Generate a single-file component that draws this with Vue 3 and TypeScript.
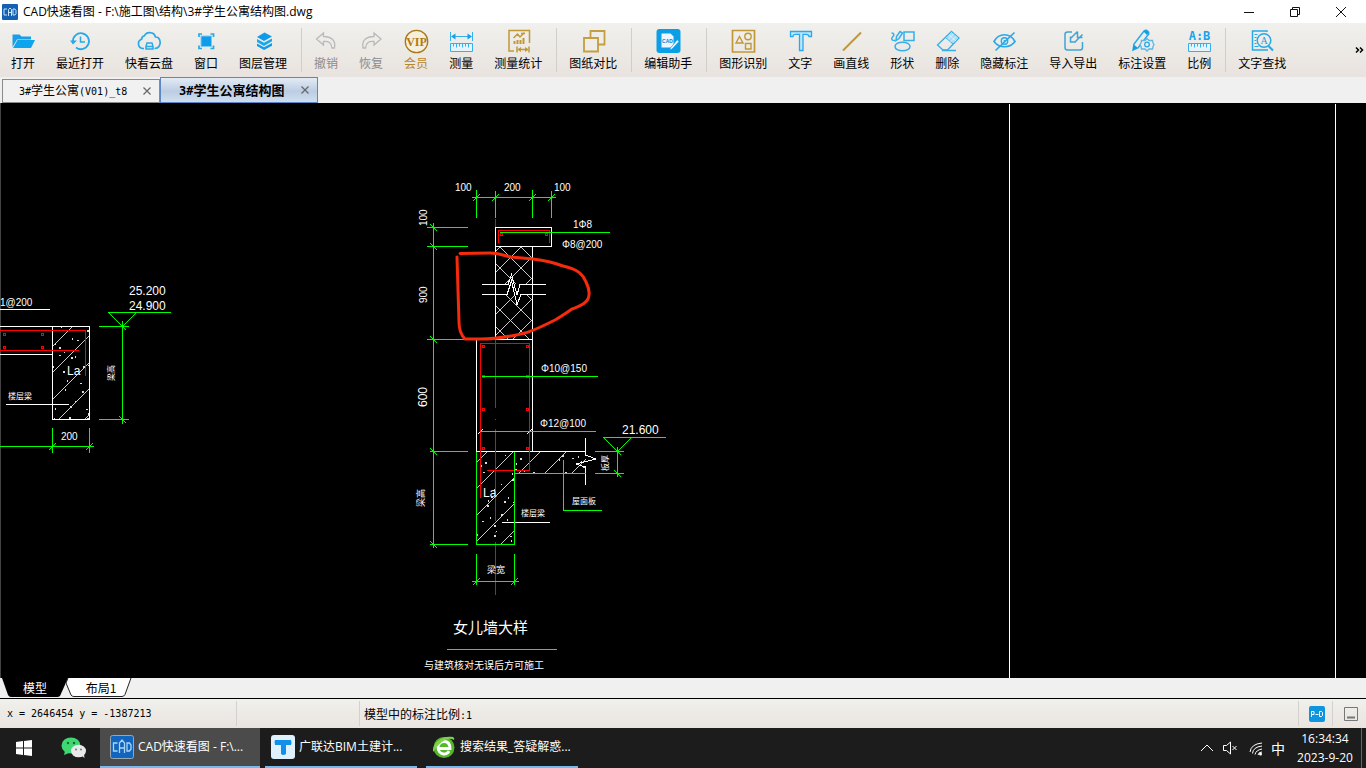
<script setup lang="ts">
interface Tool {
  label: string
  icon: string
  tone?: 'muted' | 'gold'
  divider?: boolean
}

const ruler = (y: number): string =>
  `<path d="M2.500 ${y}h22v8h-22zM5.500 ${y}v3M8.500 ${y}v4M11.500 ${y}v3M14.500 ${y}v4M17.500 ${y}v3M20.500 ${y}v4" fill="#e3f4fc" stroke="#35b0ec"/>`

const tools: Tool[] = [
  {
    label: '打开',
    icon: '<path fill="#1a9fe6" d="M2.500 19V6.500h7l2 2H21v3H7z"/><path fill="#0ea5ee" d="M7.500 12H25L21 20H3z"/>',
  },
  {
    label: '最近打开',
    icon: '<g fill="none" stroke="#27a9e8" stroke-width="1.800"><path d="M6 14a8 8 0 1 1 3 5.500"/><path d="M13.500 8.500V14H18" stroke-width="1.500"/></g><path fill="#27a9e8" d="M3 12.500h7L6 16.500z"/>',
  },
  {
    label: '快看云盘',
    icon: '<path d="M8 20.500H6.500a4.800 4.800 0 0 1-1-9.200 4 4 0 0 1 3-3.500C10 3.500 18 3 19.500 9c4.500 0 5.500 5 4 8.500-1 2.500-3 3-5 3" fill="none" stroke="#27a9e8" stroke-width="1.700"/><path d="M10 18.500l1-3.500h5l1 3.500v2.500h-7zM10 18.500h7" fill="none" stroke="#27a9e8" stroke-width="1.500"/>',
  },
  {
    label: '窗口',
    icon: '<path d="M8 8h10.500v10.500H8z" fill="#0e9ded" stroke="#7ccaf3"/><path d="M6 9V6h3M17.500 6h3v3M20.500 17.500v3h-3M9 20.500H6v-3" fill="none" stroke="#27a9e8" stroke-width="1.700"/>',
  },
  {
    label: '图层管理',
    icon: '<path fill="#0f9bea" d="M14.500 4.500L22 8.500l-8 4.500-7-4z"/><path fill="#1aa6ee" d="M7 11l7 3.800L22 10.500v2.800L14 18l-7-4z"/><path fill="#0f9bea" d="M7 15.500l7 3.800L22 15v2.800L14 22l-7-4z"/>',
  },
  {
    label: '撤销',
    tone: 'muted',
    divider: true,
    icon: '<path d="M10.500 5L3.500 11l7 6v-3.500c5-.500 8 1 8.500 6.500h2.500C23 12 18 8.500 10.500 8.500z" fill="none" stroke="#b9b9b9" stroke-width="1.300"/>',
  },
  {
    label: '恢复',
    tone: 'muted',
    icon: '<path d="M16 5l7 6-7 6v-3.500c-5-.500-8 1-8.500 6.500H5C3.500 12 8.500 8.500 16 8.500z" fill="none" stroke="#b9b9b9" stroke-width="1.300"/>',
  },
  {
    label: '会员',
    tone: 'gold',
    icon: '<circle cx="13.500" cy="13.500" r="11.200" fill="#f6efdc" stroke="#a87718" stroke-width="1.300"/><text x="13.500" y="17.500" text-anchor="middle" font-family="Liberation Serif, serif" font-weight="700" font-size="12" fill="#b07b10">VIP</text>',
  },
  {
    label: '测量',
    icon: `<path d="M2.500 4v9M24.500 4v9M4 8.500h19" stroke="#35b0ec" fill="none"/><path fill="#179fe6" d="M3 8.500l4.500-3v6zM24 8.500l-4.500-3v6z"/>${ruler(15.5)}`,
  },
  {
    label: '测量统计',
    icon: '<g fill="none" stroke="#c09838" stroke-width="1.500"><path d="M9 23H4V2.500h20.500V15"/><path d="M8.500 10l4-4 2.500 3 4.500-4.500M16 5.500h4"/><path d="M9.500 16v-3M12.500 16v-4M15.500 16v-4M18.500 16v-6" stroke-width="2"/><path d="M12 18.500v6M24 18.500v6M13 21.500h10"/></g><path fill="#c09838" d="M12.500 21.500l3.500-2.500v5zM23.500 21.500L20 19v5z"/>',
  },
  {
    label: '图纸对比',
    divider: true,
    icon: '<g fill="#efede8" stroke="#c49e40" stroke-width="1.800"><path d="M10.500 3h14v13.500h-14z"/><path d="M4 10h14v13.500H4z"/></g>',
  },
  {
    label: '编辑助手',
    divider: true,
    icon: '<rect x="1.500" y="1" width="24" height="24" rx="3" fill="#0c9fe6"/><path d="M6.500 5.500h9l3 3v11h-12z" fill="#eaf7ff"/><text x="12.500" y="15" text-anchor="middle" font-family="Liberation Sans, sans-serif" font-size="5" font-weight="700" fill="#0c7fc4">CAD</text><path d="M15.500 20l-1 2 2.500-1 7-7.500-1.800-1.700z" fill="#fff" stroke="#0c9fe6" stroke-width=".700"/>',
  },
  {
    label: '图形识别',
    divider: true,
    icon: '<g fill="none" stroke="#c09838" stroke-width="1.400"><path d="M2.500 2.500h22v21.500h-22z" stroke-width="1.700"/><path d="M9.500 8.500l3.500 6.500H6z"/><circle cx="18" cy="8.500" r="3.200"/><path d="M15.500 15.500H21V21h-5.500z"/></g>',
  },
  {
    label: '文字',
    icon: '<path d="M3.500 3.500h21V8.500H22c0-2-1-2.200-3-2.200h-3V22.500h-3.500V6.300H9c-2 0-3 .200-3 2.200H3.500z" fill="#bfe6f9" stroke="#24abed" stroke-width="1.300"/>',
  },
  { label: '画直线', icon: '<path d="M5 22.500L23 4.500" stroke="#c09838" stroke-width="2"/>' },
  {
    label: '形状',
    icon: '<g fill="none" stroke="#36aee9" stroke-width="1.500"><path d="M15 4h10v8.500H15z"/><ellipse cx="13.500" cy="18.500" rx="7.500" ry="4.300"/><path d="M2.500 5c3 0 3 2 1 4s0 4 3 3.500"/><path d="M7 12.500l.500-4L11 3.500l2.500 1.500L10 10.500z" fill="#d9f0fb"/></g>',
  },
  {
    label: '删除',
    icon: '<path d="M17.500 3.500L25 10 13.500 22H9l-5.500-5z" fill="none" stroke="#36aee9" stroke-width="1.300"/><path d="M17.500 3.500L25 10l-6 6-7.500-6.500z" fill="#a8dcf5" stroke="#36aee9"/><path d="M15 7l7 6M20 5.500l-6 6M22.500 8l-6 6" stroke="#eff8fc" stroke-width=".700"/><path d="M8 22.500h14" stroke="#36aee9" stroke-width="1.500"/>',
  },
  {
    label: '隐藏标注',
    icon: '<g fill="none" stroke="#28a9ea" stroke-width="1.700"><path d="M3 13.500C8 4.500 19 4.500 24 13.500 19 20.500 8 20.500 3 13.500z"/><circle cx="13.500" cy="13" r="3.200" stroke-width="1.400"/><path d="M4.500 22.500l19-18"/></g><circle cx="13.500" cy="13" r="1" fill="#28a9ea"/>',
  },
  {
    label: '导入导出',
    icon: '<g fill="none" stroke="#3fa5d5" stroke-width="1.500"><path d="M12 4H7.500Q5 4 5 6.500v13Q5 22 7.500 22h12.500Q22.500 22 22.500 19.500V14"/><path d="M17.500 3.500L10.500 10.500v3.500h4.500L22.500 6.500M17.500 3.500v6h5M10.500 8.500v5.500H16"/></g>',
  },
  {
    label: '标注设置',
    icon: '<path d="M4 22l1-6L15 3q2.500-2 4.500 1 1 2-1 3.500L9 20z" fill="none" stroke="#27a9e8" stroke-width="1.500"/><path d="M4 22.500l.500-6 4 3zM14.500 3.500q3-2.500 5 1L18 7z" fill="#0b9fe8"/><path d="M18 10.500l2 2h3.500l.500 2.500 1 1.500-1 2-.500 2.500H20l-2 2-2-2h-3.500l-.500-2.500-1-2 1-1.500.500-2.500H16z" fill="#eeeae7" stroke="#58b9e7" stroke-width="1.300"/><circle cx="18" cy="16.500" r="2.300" fill="none" stroke="#27a9e8" stroke-width="1.300"/>',
  },
  {
    label: '比例',
    icon: `<text x="13.500" y="12" text-anchor="middle" font-family="DejaVu Sans Mono, monospace" font-weight="700" font-size="12" fill="#17a3ec">A:B</text>${ruler(15.5)}`,
  },
  {
    label: '文字查找',
    divider: true,
    icon: '<g fill="none" stroke="#27a9e8" stroke-width="1.500"><path d="M18 4V3H3.500v19H19"/><path d="M5.500 6.500h3M5.500 9.500h2M5.500 12.500h1.500M5.500 15.500h2M5.500 18.500h4" stroke-width="1"/><circle cx="15" cy="12.500" r="6.800"/><path d="M19.500 18l4.500 4.500" stroke-width="2"/></g><text x="15" y="16" text-anchor="middle" font-family="Liberation Serif, serif" font-size="10" fill="#1d9edd">A</text>',
  },
]

type Pt = [number, number]

const leftSpecks: Pt[] = [
  [61, 327], [87, 330], [72, 338], [77, 340], [55, 343], [59, 347], [64, 352], [71, 357], [75, 356], [59, 355],
  [53, 366], [83, 366], [88, 365], [63, 371], [67, 380], [80, 383], [65, 389], [82, 391], [75, 401], [70, 406],
  [55, 408], [86, 409], [88, 413], [69, 417], [54, 418], [87, 418],
]
const mainSpecks: Pt[] = [
  [505, 455], [485, 462], [481, 465], [483, 472], [512, 473], [512, 479], [501, 484], [494, 489], [488, 500],
  [491, 497], [508, 497], [504, 501], [513, 502], [501, 514], [490, 517], [482, 521], [507, 519], [494, 525],
  [496, 531], [494, 535], [477, 534], [510, 536], [511, 540], [487, 505], [539, 452], [520, 458], [516, 463],
  [515, 469], [524, 470], [533, 472], [552, 465], [562, 455], [559, 459], [572, 458], [578, 456], [565, 472],
  [581, 461], [583, 466],
]
// Dimension ticks: short 45° strokes through each extension-line crossing.
const risingTicks: Pt[] = [
  [52, 446], [89, 446], [476, 197], [495, 197], [532, 197], [551, 197], [476, 581], [514, 581],
]
const fallingTicks: Pt[] = [
  [122, 326], [122, 419], [433, 227], [433, 246], [433, 339], [433, 451], [433, 544], [617, 451], [617, 473],
]
const rebar: Pt[] = [
  [4, 334], [42, 334], [4, 347], [42, 347], [501, 234], [546, 234], [483, 346], [527, 346], [483, 376],
  [527, 376], [483, 409], [527, 409], [483, 448], [527, 448],
]
const concreteLeft = [399, 425, 452, 478, 504]
const concreteMain = [939, 965, 992, 1018, 1045]
const masonryRise = [747, 768, 789, 810, 831, 852, 873]
const masonryFall = [169, 190, 211, 232, 253, 274]
</script>

<template>
  <div class="app">
    <header class="title">
      <svg class="logo" viewBox="0 0 16 16"><rect width="16" height="16" rx="1" fill="#1461b4" /><path d="M5 5H2v6h3M6.500 12V5.500L8 4l1.500 1.500V12M6.500 8.500h3M11 5v6h2l1-1.500v-3L13 5z" fill="none" stroke="#c6e4fb" /></svg>
      <h1>CAD快速看图 - F:\施工图\结构\3#学生公寓结构图.dwg</h1>
      <div class="win">
        <button aria-label="最小化"><svg viewBox="0 0 12 12"><path d="M1 6.500h10" /></svg></button>
        <button aria-label="还原"><svg viewBox="0 0 12 12"><path d="M1.500 3.500h7v7h-7zM3.500 3.500v-2h7v7h-2" /></svg></button>
        <button aria-label="关闭"><svg viewBox="0 0 12 12"><path d="M1 1l10 10M11 1L1 11" /></svg></button>
      </div>
    </header>

    <nav class="tools">
      <template v-for="t in tools" :key="t.label">
        <i v-if="t.divider" class="divider"></i>
        <button class="tool" :class="t.tone">
          <svg viewBox="0 0 26 26" v-html="t.icon"></svg>
          <span>{{ t.label }}</span>
        </button>
      </template>
      <button class="more" aria-label="更多"><svg viewBox="0 0 9 6"><path d="M1 .500L3.500 3 1 5.500M5 .500L7.500 3 5 5.500" /></svg></button>
    </nav>

    <div class="docs">
      <div class="doc">
        <button class="name"><span class="mono">3#</span>学生公寓<span class="mono">(V01)_t8</span></button>
        <button class="close" aria-label="关闭"><svg viewBox="0 0 8 8"><path d="M.500.500l7 7M7.500.500l-7 7" /></svg></button>
      </div>
      <div class="doc active">
        <button class="name"><span class="mono">3#</span>学生公寓结构图</button>
        <button class="close" aria-label="关闭"><svg viewBox="0 0 8 8"><path d="M.500.500l7 7M7.500.500l-7 7" /></svg></button>
      </div>
    </div>

    <main class="canvas">
      <svg class="drawing">
        <defs>
          <clipPath id="beamL"><rect x="52" y="326" width="38" height="94" /></clipPath>
          <clipPath id="beamM"><path d="M476 451h110v22h-72v71h-38z" /></clipPath>
          <clipPath id="brick"><path d="M495 246h38v38h-38zM495 295h38v44h-38z" /></clipPath>
        </defs>
        <g transform="translate(0 -103)">
          <g class="hatch">
            <g clip-path="url(#beamL)">
              <line v-for="s in concreteLeft" :key="s" :x1="s - 430" y1="430" :x2="s - 320" y2="320" />
            </g>
            <g clip-path="url(#beamM)">
              <line v-for="s in concreteMain" :key="s" :x1="s - 550" y1="550" :x2="s - 445" y2="445" />
            </g>
            <g clip-path="url(#brick)">
              <line v-for="s in masonryRise" :key="s" :x1="s - 340" y1="340" :x2="s - 240" y2="240" />
              <line v-for="s in masonryFall" :key="s" :x1="s + 240" y1="240" :x2="s + 340" y2="340" />
            </g>
          </g>
          <g fill="#ddd">
            <rect v-for="(p, i) in leftSpecks" :key="i" :x="p[0]" :y="p[1]" :width="1 + (i % 2)" :height="2 - (i % 3 === 0 ? 1 : 0)" />
            <rect v-for="(p, i) in mainSpecks" :key="i" :x="p[0]" :y="p[1]" :width="1 + (i % 2)" :height="2 - (i % 3 === 0 ? 1 : 0)" />
          </g>

          <g class="white">
            <path d="M0 309.500H50M0 326.500H89.500V419.500H52.500V326.500M0 354.500H52M6 404.500H69" />
            <path d="M495.500 227.500H551.500V246.500H495.500zM495.500 246V339M532.500 246V451M476.500 451V339.500H532M476 451.500H586" />
            <path d="M482 284.500H508L511.500 274.500 517 295 520 284.500H546M482 294.500H507L511.500 281 517 304.500 521 294.500H546" />
            <path d="M585.500 438V455L596 459 576 464 585.500 467V485M502 522.500H550M478 434l5-5M527 434l5-5" />
            <path d="M1009.500 104V678M1335.500 104V678" />
          </g>

          <g class="red">
            <path d="M0 330.500H86M0 350.500H79M85.500 330V376" />
            <path d="M498.500 243V230.500H549.500V243" />
            <path d="M480.500 498V343.500H529.500V470.500H487" />
            <path d="M495.500 219V227M495.500 340V408M495.500 419v1M495.500 429V521M495.500 532v1M495.500 542V595" />
            <rect v-for="(p, i) in rebar" :key="i" :x="p[0] - 1" :y="p[1] - 1" width="2" height="2" />
          </g>

          <g class="green">
            <path d="M108 312.500H171M108.500 312.500l14 14 14-14M122.500 321V424M99 326.500H129M99 419.500H129" />
            <path d="M0 446.500H94M52.500 428V453M89.500 428V453" />
            <path d="M472 197.500H556M476.500 190V218M495.500 191V218M532.500 190V218M551.500 191V218" />
            <path d="M433.500 223V548M427 227.500H468M427 246.500H468M427 339.500H468M430 451.500H468M430 544.500H468" />
            <path d="M500 232.500H610M482 376.500H598M480 431.500H596" />
            <path d="M476.500 452V544.500H514.500V452M514 473.500H586M563.500 460V510.500H602" />
            <path d="M603 437.500H666M603.500 437.500l14 14 14-14M617.500 447V477M595 451.500H624M595 473.500H624" />
            <path d="M476.500 554V585M514.500 554V585M472 581.500H519M447 649.500H557" />
            <path v-for="(p, i) in risingTicks" :key="'r' + i" :d="`M${p[0] - 3} ${p[1] + 4}l7 -7`" />
            <path v-for="(p, i) in fallingTicks" :key="'f' + i" :d="`M${p[0] - 3} ${p[1] - 3}l7 7`" />
          </g>

          <g class="note">
            <text x="0" y="306">1@200</text>
            <text x="129" y="295" class="level">25.200</text>
            <text x="129" y="310" class="level">24.900</text>
            <text x="61" y="440">200</text>
            <text x="67" y="375" class="level">La</text>
            <text x="455" y="191">100</text>
            <text x="504" y="191">200</text>
            <text x="554" y="191">100</text>
            <text x="573" y="228">1Φ8</text>
            <text x="562" y="248">Φ8@200</text>
            <text x="541" y="372">Φ10@150</text>
            <text x="540" y="427">Φ12@100</text>
            <text x="622" y="434" class="level">21.600</text>
            <text x="483" y="497" class="level">La</text>
            <text transform="translate(427 226) rotate(-90)">100</text>
            <text transform="translate(427 303) rotate(-90)">900</text>
            <text transform="translate(427 407) rotate(-90)" class="level">600</text>
          </g>
          <g class="cjk">
            <text x="8" y="399">楼层梁</text>
            <text x="521" y="516">楼层梁</text>
            <text x="572" y="504">屋面板</text>
            <text x="487" y="573" class="wide">梁宽</text>
            <text transform="translate(114 381) rotate(-90)">梁高</text>
            <text transform="translate(424 507) rotate(-90)" class="wide">梁高</text>
            <text transform="translate(608 471) rotate(-90)">板厚</text>
            <text x="453" y="633" class="caption">女儿墙大样</text>
            <text x="424" y="669" class="remark">与建筑核对无误后方可施工</text>
          </g>
          <path
            class="markup"
            d="M460 253.500L490 253C500 253 504 256 511 257L533 259Q550 261 563 266C577 269 583 274 586 282Q591 292 588 299C585 305 577 307 572 309Q562 316 555 320C543 326 533 331 525 333Q500 339 480 339L465 339Q459 333 459 322L458 290 457 257"
          />
        </g>
      </svg>
    </main>

    <div class="sheets">
      <button class="sheet current"><svg viewBox="0 0 66 20"><path d="M0 0H66L58 18Q57 19 55 19H9Q7 19 6 17z" fill="#000" /></svg><span>模型</span></button>
      <button class="sheet next"><svg viewBox="0 0 66 20"><path d="M2 0L0 5 5 17Q6 18.500 8 18.500H56Q58 18.500 59 16.500L65 0" fill="#fff" stroke="#222" /></svg><span>布局1</span></button>
    </div>

    <footer class="status">
      <div class="coords mono">x = 2646454 y = -1387213</div>
      <div class="blank"></div>
      <div class="scale">模型中的标注比例<span class="mono">:1</span></div>
      <button class="cell" aria-label="P-D"><svg viewBox="0 0 16 16"><rect width="16" height="16" rx="2" fill="#0d95df" /><path d="M2.500 11V5.500h2.500v3H3M6.500 8.500h3M10.500 5.500v5h2l1-1v-3l-1-1z" fill="none" stroke="#fff" /></svg></button>
      <button class="cell" aria-label="面板"><svg viewBox="0 0 16 16"><path d="M1.500 1.500h13v13h-13z" fill="none" stroke="#777" /><path d="M4 11.500h8" stroke="#777" stroke-width="2" /></svg></button>
    </footer>

    <div class="taskbar">
      <button class="start" aria-label="开始"><svg viewBox="0 0 16 16"><path fill="#fff" d="M0 2l7-1v6.500H0zM8 1l8-1v7.500H8zM0 8.500h7V15l-7-1zM8 8.500h8V16l-8-1z" /></svg></button>
      <button class="wechat" aria-label="微信">
        <svg viewBox="0 0 26 22"><ellipse cx="10" cy="8.500" rx="9.500" ry="8" fill="#3fd772" /><path d="M4 14l-1 4 5-2z" fill="#3fd772" /><ellipse cx="17.500" cy="14" rx="7.500" ry="6.300" fill="#e9e9e9" /><path d="M21 19l2.500 2-.500-3.500z" fill="#e9e9e9" /><g fill="#176a35"><circle cx="7" cy="6" r="1.200" /><circle cx="13" cy="6" r="1.200" /></g><g fill="#777"><circle cx="15" cy="12.500" r="1" /><circle cx="20" cy="12.500" r="1" /></g></svg>
      </button>
      <button class="task on">
        <svg viewBox="0 0 24 24"><rect x=".500" y=".500" width="23" height="23" rx="2" fill="#1265bd" stroke="#9aa6b2" /><path d="M7.500 8H3.500v8h4M9.500 18V8l2.500-3 2.500 3v10M9.500 13h5M17 8v8h2.500l1.500-2v-4l-1.500-2z" fill="none" stroke="#a9d6f8" stroke-width="1.300" /></svg>
        <span>CAD快速看图 - F:\...</span>
      </button>
      <button class="task">
        <svg viewBox="0 0 24 24"><rect width="24" height="24" rx="3" fill="#dff1fd" /><path d="M4 5h16q1 3 0 5h-5v9q-3 2-5 0v-9H4q-1-3 0-5z" fill="#128fe8" /></svg>
        <span>广联达BIM土建计...</span>
      </button>
      <button class="task">
        <svg viewBox="0 0 24 24"><circle cx="12" cy="12.500" r="10.500" fill="#55b82c" /><path d="M17 16q-2 3.500-5.500 3A6.500 6.500 0 0 1 6 12.500 6 6 0 0 1 12 6.500q6 0 6 7H6" fill="none" stroke="#fff" stroke-width="2.800" /><path d="M1 17C0 9 9 0 21 2q2 1 1 3Q13 0 1 17z" fill="#7ed34b" /></svg>
        <span>搜索结果_答疑解惑...</span>
      </button>
      <div class="tray">
        <svg class="up" viewBox="0 0 14 16"><path d="M1 11l6-6 6 6" /></svg>
        <svg class="vol" viewBox="0 0 16 16"><path d="M1.500 5.500h3l4-3.500v12l-4-3.500h-3zM10.500 6l4 4M14.500 6l-4 4" /></svg>
        <svg class="net" viewBox="0 0 14 16"><path d="M1 12Q2 4 13 3M3.500 13.500Q4 7 13 6M6 14.500Q7 10 13 9M9 15Q9.500 12 13 12" /><circle cx="11.500" cy="14" r="1.500" fill="#fff" stroke="none" /></svg>
        <button class="ime">中</button>
        <div class="clock"><time>16:34:34</time><time>2023-9-20</time></div>
        <i class="peek"></i>
      </div>
    </div>
  </div>
</template>

<style>
html,
body {
  margin: 0;
  background: #000;
}
</style>

<style scoped>
.app {
  display: flex;
  flex-direction: column;
  height: 100vh;
  overflow: hidden;
  background: #f0f0f0;
  color: #000;
  font: 12px/16px 'Open Sans', 'Noto Sans CJK SC', sans-serif;
}
button {
  margin: 0;
  padding: 0;
  border: 0;
  background: none;
  color: inherit;
  font: inherit;
}
svg {
  display: block;
  flex: none;
}
.mono {
  font-family: 'DejaVu Sans Mono', monospace;
  font-size: 10px;
}
.title {
  display: flex;
  align-items: center;
  height: 23px;
  flex: none;
  padding-left: 2px;
  background: #fff;
}
.logo {
  width: 16px;
  height: 16px;
}
h1 {
  flex: 1;
  margin: 0 0 0 5px;
  font-size: 12px;
  font-weight: 400;
  white-space: nowrap;
}
.win {
  display: flex;
}
.win button {
  display: flex;
  align-items: center;
  justify-content: center;
  width: 46px;
  height: 20px;
}
.win button:last-child {
  margin-right: 2px;
}
.win svg {
  width: 12px;
  height: 12px;
  fill: none;
  stroke: #111;
}
.tools {
  display: flex;
  flex: none;
  height: 54px;
  padding-left: 1px;
  background: linear-gradient(#f0f0ec, #e9e3df);
}
.tool {
  display: flex;
  flex: none;
  flex-direction: column;
  align-items: center;
  padding: 5px 11px 0 10px;
  font-family: 'Noto Sans CJK SC', sans-serif;
  white-space: nowrap;
}
.tool svg {
  width: 26px;
  height: 26px;
  margin: 0 -1px;
}
.tool span {
  line-height: 18px;
}
.muted {
  color: #8c8c8c;
}
.gold {
  color: #b8862b;
}
.divider {
  flex: none;
  width: 1px;
  height: 44px;
  margin: 5px 2px 0 3px;
  background: #d0cecb;
}
.more {
  display: flex;
  align-items: center;
  margin-left: auto;
  padding-right: 2px;
}
.more svg {
  width: 9px;
  height: 6px;
  fill: none;
  stroke: #000;
  stroke-width: 1.5;
}
.docs {
  display: flex;
  flex: none;
  align-items: flex-end;
  height: 26px;
  padding-left: 2px;
  box-sizing: border-box;
  background: #f0f0f0;
}
.doc {
  display: flex;
  align-items: center;
  justify-content: space-between;
  width: 158px;
  height: 24px;
  box-sizing: border-box;
  padding: 0 8px 0 16px;
  border: 1px solid #8b8b8b;
  background: #f1f1f1;
  font-family: 'Noto Sans CJK SC', sans-serif;
}
.doc.active {
  height: 26px;
  padding-left: 18px;
  border-color: #5c87c4;
  background: linear-gradient(#e3ebf6, #bccde3 55%, #cfdff0);
  font-size: 13px;
  font-weight: 700;
}
.active .mono {
  font-size: 12px;
}
.name {
  white-space: nowrap;
}
.close svg {
  width: 8px;
  height: 8px;
  fill: none;
  stroke: #666;
  stroke-width: 1.2;
}
.canvas {
  flex: 1;
  min-height: 0;
  background: #000;
}
.drawing {
  width: 100%;
  height: 100%;
  overflow: hidden;
  box-sizing: border-box;
  shape-rendering: crispEdges;
  box-shadow: inset 1px 0 #444;
}
.white {
  fill: none;
  stroke: #fff;
}
.hatch {
  fill: none;
  stroke: #ccc;
}
.red {
  fill: none;
  stroke: #f00;
}
.green {
  fill: none;
  stroke: #0f0;
}
.note {
  fill: #fff;
  font-family: 'Liberation Sans', sans-serif;
  font-size: 10px;
}
.level {
  font-size: 12px;
}
.cjk {
  fill: #fff;
  font-family: 'Noto Sans CJK SC', sans-serif;
  font-size: 8px;
}
.wide {
  font-size: 9px;
}
.caption {
  font-size: 15px;
}
.remark {
  font-size: 10px;
}
.markup {
  fill: none;
  stroke: #f52b0b;
  stroke-width: 3;
  stroke-linejoin: round;
  stroke-linecap: round;
  shape-rendering: auto;
}
.sheets {
  display: flex;
  flex: none;
  height: 20px;
  padding-left: 2px;
  border-bottom: 1px solid #000;
  background: #f0f0f0;
}
.sheet {
  position: relative;
  width: 66px;
  height: 20px;
  line-height: 18px;
  font-family: 'Noto Sans CJK SC', sans-serif;
}
.sheet.current {
  color: #fff;
}
.sheet svg {
  position: absolute;
  top: 0;
  left: 0;
  width: 66px;
  height: 20px;
}
.sheet.next svg {
  left: -2px;
}
.sheet span {
  position: relative;
}
.status {
  display: flex;
  flex: none;
  align-items: center;
  height: 29px;
  background: linear-gradient(#f0f0ec, #eae4df);
}
.status > * {
  height: 25px;
  line-height: 25px;
  box-sizing: border-box;
}
.coords {
  width: 237px;
  padding-left: 7px;
  border-right: 1px solid #d3d0cd;
}
.blank {
  width: 123px;
  border-right: 1px solid #d3d0cd;
}
.scale {
  flex: 1;
  padding-left: 4px;
  font-family: 'Noto Sans CJK SC', sans-serif;
}
.cell {
  display: flex;
  align-items: center;
  justify-content: center;
  width: 34px;
  padding-left: 2px;
  border-left: 1px solid #d3d0cd;
}
.cell svg {
  width: 16px;
  height: 16px;
}
.taskbar {
  display: flex;
  flex: none;
  height: 40px;
  background: #1c1c1c;
  color: #fff;
}
.start,
.wechat {
  display: flex;
  align-items: center;
  justify-content: center;
  width: 48px;
}
.start svg {
  width: 16px;
  height: 16px;
}
.wechat {
  width: 52px;
}
.wechat svg {
  width: 26px;
  height: 22px;
}
.task {
  display: flex;
  align-items: center;
  gap: 4px;
  width: 152px;
  box-sizing: border-box;
  margin-right: 9px;
  padding-left: 6px;
  border-bottom: 2px solid #76b9ed;
  white-space: nowrap;
}
.task.on {
  width: 160px;
  margin-right: 5px;
  padding-left: 10px;
  background: #4b4b4b;
}
.task svg {
  width: 24px;
  height: 24px;
}
.tray {
  display: flex;
  align-items: center;
  margin-left: auto;
}
.tray svg {
  height: 16px;
  fill: none;
  stroke: #fff;
}
.up {
  width: 14px;
}
.vol {
  width: 16px;
  margin-left: 8px;
}
.net {
  width: 14px;
  margin-left: 11px;
}
.ime {
  width: 14px;
  margin: 0 10px 0 8px;
  font: 14px/20px 'Noto Sans CJK SC', sans-serif;
}
.clock {
  display: flex;
  flex-direction: column;
  width: 60px;
  text-align: center;
}
.clock time {
  line-height: 19px;
}
.peek {
  width: 1px;
  height: 40px;
  margin: 0 4px 0 6px;
  background: #666;
}
</style>
